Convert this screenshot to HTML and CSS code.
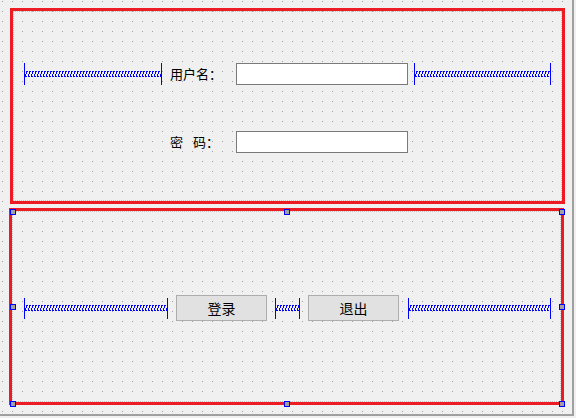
FILE: index.html
```html
<!DOCTYPE html>
<html lang="zh">
<head>
<meta charset="utf-8">
<title>登录</title>
<link rel="stylesheet" href="styles.css">
</head>
<body>
<svg class="defs" width="0" height="0" aria-hidden="true">
  <defs>
    <pattern id="spring" x="0" y="0" width="3" height="6" patternUnits="userSpaceOnUse">
      <rect x="1" y="0" width="2" height="1" fill="#0000ff"/>
      <rect x="1" y="1" width="1" height="2" fill="#0000ff"/>
      <rect x="0" y="3" width="1" height="2" fill="#0000ff"/>
      <rect x="0" y="5" width="2" height="1" fill="#0000ff"/>
    </pattern>
  </defs>
</svg>
<div class="form">
  <div class="layout top">
    <div class="frame">
      <div class="row r1">
        <div class="spacer sp-a"><svg class="coil"><rect width="100%" height="100%" fill="url(#spring)"/></svg></div>
        <span class="lbl">用户名：</span>
        <div class="input"></div>
        <div class="spacer sp-b"><svg class="coil"><rect width="100%" height="100%" fill="url(#spring)"/></svg></div>
      </div>
      <div class="row r2">
        <span class="lbl">密<span class="gap"> </span>码：</span>
        <div class="input"></div>
      </div>
    </div>
  </div>
  <div class="layout bottom">
    <div class="frame">
      <div class="row r3">
        <div class="spacer sp-c"><svg class="coil"><rect width="100%" height="100%" fill="url(#spring)"/></svg></div>
        <div class="btn">登录</div>
        <div class="spacer sp-d"><svg class="coil"><rect width="100%" height="100%" fill="url(#spring)"/></svg></div>
        <div class="btn">退出</div>
        <div class="spacer sp-e"><svg class="coil"><rect width="100%" height="100%" fill="url(#spring)"/></svg></div>
      </div>
    </div>
    <span class="handle h-tl"></span>
    <span class="handle h-tm"></span>
    <span class="handle h-tr"></span>
    <span class="handle h-ml"></span>
    <span class="handle h-mr"></span>
    <span class="handle h-bl"></span>
    <span class="handle h-bm"></span>
    <span class="handle h-br"></span>
  </div>
</div>
</body>
</html>
```
FILE: styles.css
```css
html, body {
  margin: 0;
  padding: 0;
  background: #f0f0f0;
}
body {
  width: 576px;
  height: 418px;
  overflow: hidden;
  font-family: "Noto Sans CJK SC", "Noto Sans", sans-serif;
  color: #000;
}
.defs {
  position: absolute;
  width: 0;
  height: 0;
}
.form {
  width: 574px;
  height: 416px;
  box-sizing: border-box;
  border-right: 2px solid #a0a0a0;
  border-bottom: 2px solid #a0a0a0;
  background-color: #f0f0f0;
  background-image: conic-gradient(at 1px 1px, transparent 75%, #a0a0a0 0);
  background-size: 10px 10px;
  background-position: 2px 1px;
  display: flex;
  flex-direction: column;
  overflow: hidden;
}
.layout {
  position: relative;
  box-sizing: border-box;
  width: 555px;
  border: 3px solid #ed1c24;
}
.layout.top {
  height: 196px;
  margin: 8px 0 0 10px;
}
.layout.bottom {
  height: 197px;
  margin: 4px 0 0 9px;
}
.frame {
  box-sizing: border-box;
  height: 100%;
  border: 1px dotted #c4c4c4;
  display: flex;
  flex-direction: column;
}
.row {
  display: flex;
  align-items: center;
}
.r1 {
  height: 22px;
  margin: 51px 0 0 10px;
}
.r2 {
  height: 22px;
  margin: 46px 0 0 156px;
}
.r3 {
  height: 26px;
  margin: 83px 0 0 11px;
}
.spacer {
  box-sizing: border-box;
  height: 22px;
  border-left: 1px solid #0000ff;
  border-right: 1px solid #0000ff;
  display: flex;
  align-items: center;
  flex: none;
}
.r3 .spacer {
  height: 21px;
}
.coil {
  display: block;
  width: 100%;
  height: 6px;
  margin-top: -1px;
}
.sp-a { width: 138px; }
.sp-b { width: 137px; margin-left: 6px; }
.sp-c { width: 144px; }
.sp-d { width: 25px; margin-left: 8px; }
.sp-e { width: 143px; margin-left: 9px; }
.lbl {
  width: 66px;
  margin-left: 8px;
  font-size: 13px;
  line-height: 22px;
  white-space: pre;
  flex: none;
}
.r2 .lbl {
  margin-left: 0;
}
.gap {
  display: inline-block;
  width: 10px;
}
.input {
  box-sizing: border-box;
  width: 172px;
  height: 22px;
  background: #fff;
  border: 1px solid #7a7a7a;
  flex: none;
}
.btn {
  box-sizing: border-box;
  width: 91px;
  height: 26px;
  margin-left: 8px;
  background: #e1e1e1;
  border: 1px solid #adadad;
  font-size: 14px;
  line-height: 24px;
  text-align: center;
  flex: none;
}
.handle {
  position: absolute;
  box-sizing: border-box;
  width: 6px;
  height: 6px;
  border: 1px solid #0000ff;
  background: #a0a0a0;
}
.h-tl { left: -2px; top: -2px; }
.h-tm { left: 272px; top: -2px; }
.h-tr { left: 547px; top: -2px; }
.h-ml { left: -2px; top: 93px; }
.h-mr { left: 547px; top: 93px; }
.h-bl { left: -2px; top: 190px; }
.h-bm { left: 272px; top: 190px; }
.h-br { left: 547px; top: 190px; }
```
